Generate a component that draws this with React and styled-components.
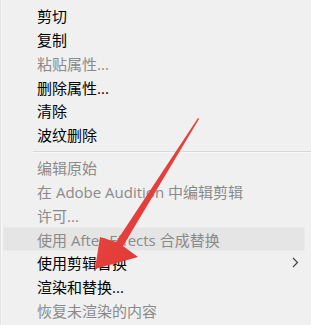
import React from 'react'
import styled, { createGlobalStyle } from 'styled-components'

const Global = createGlobalStyle`
  html, body { margin: 0; padding: 0; background: #f0f0f0; }
  body { font-family: "Open Sans", "Noto Sans CJK SC", sans-serif; }
`

const Menu = styled.div`
  position: relative;
  width: 311px;
  height: 325px;
  overflow: hidden;
  box-sizing: border-box;
  background: #f0f0f0;
  padding: 4px 0 0 2px;
  border-left: 1px solid #e2e2e2;
  box-shadow: inset 1px 0 0 #fafafa;
`

const Item = styled.div`
  display: flex;
  align-items: center;
  height: 23.75px;
  margin-right: 6px;
  padding-left: 34px;
  font-size: 15px;
  color: ${p => (p.disabled ? '#8a8a8a' : '#000')};
  background: ${p => (p.hover ? '#e5e5e5' : 'transparent')};
  box-shadow: ${p => (p.hover ? 'inset 0 0 0 1px #ebebeb' : 'none')};
  white-space: nowrap;
`

const Label = styled.span`
  flex: 1;
`

const Chevron = styled.span`
  width: 20px;
  display: flex;
  justify-content: center;
  color: #444;
  svg { display: block; }
`

const Separator = styled.div`
  height: 1px;
  margin: 4px 0 3.5px 30px;
  background: #d9d9d9;
  border-bottom: 1px solid #f8f8f8;
`

const Arrow = styled.svg`
  position: absolute;
  left: 0;
  top: 0;
  pointer-events: none;
`

const top = [
  { t: '剪切' },
  { t: '复制' },
  { t: '粘贴属性...', d: true },
  { t: '删除属性...' },
  { t: '清除' },
  { t: '波纹删除' },
]

const bottom = [
  { t: '编辑原始', d: true },
  { t: '在 Adobe Audition 中编辑剪辑', d: true },
  { t: '许可...', d: true },
  { t: '使用 After Effects 合成替换', d: true, h: true },
  { t: '使用剪辑替换', sub: true },
  { t: '渲染和替换...' },
  { t: '恢复未渲染的内容', d: true },
]

function Row({ item }) {
  return (
    <Item disabled={item.d} hover={item.h}>
      <Label>{item.t}</Label>
      {item.sub && (
        <Chevron>
          <svg width="7" height="11" viewBox="0 0 7 11">
            <path d="M1 1 L5.5 5.5 L1 10" fill="none" stroke="#444" strokeWidth="1.2" />
          </svg>
        </Chevron>
      )}
    </Item>
  )
}

export default function App() {
  return (
    <>
      <Global />
      <Menu>
        {top.map(i => <Row key={i.t} item={i} />)}
        <Separator />
        {bottom.map(i => <Row key={i.t} item={i} />)}
        <Arrow width="311" height="325" viewBox="0 0 311 325">
          <defs>
            <linearGradient id="red" x1="0" y1="0" x2="1" y2="1">
              <stop offset="0" stopColor="#e8504a" />
              <stop offset="1" stopColor="#e0302c" />
            </linearGradient>
          </defs>
          <polygon
            points="198,119 122,246 137,257 94,269 99,237 115,242 197,118"
            fill="url(#red)"
          />
        </Arrow>
      </Menu>
    </>
  )
}
